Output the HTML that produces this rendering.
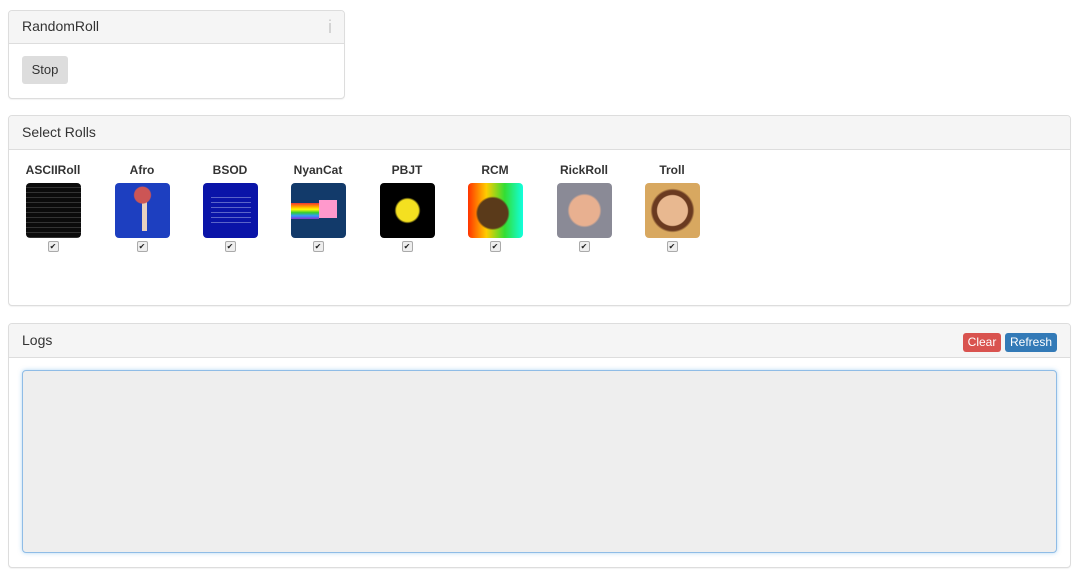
<!DOCTYPE html>
<html><head><meta charset="utf-8"><style>
body{margin:0;background:#fff;font-family:"Liberation Sans",sans-serif;color:#333;font-size:14px}
.p{position:absolute;border:1px solid #ddd;border-radius:4px;background:#fff;box-shadow:0 1px 1px rgba(0,0,0,.05)}
.h{background:#f5f5f5;border-bottom:1px solid #ddd;height:32px;line-height:31px;padding-left:13px;font-size:14px;color:#333;border-radius:3px 3px 0 0;position:relative}
.btn{position:absolute;border-radius:3px;font-size:12px;color:#fff;text-align:center}
.it{position:absolute;top:162px;width:80px;text-align:center}
.it b{display:block;font-size:12px;height:21px;line-height:16px}
.im{width:55px;height:55px;border-radius:4px;margin:0 auto}
.cb{width:9px;height:9px;margin:3px auto 0;border:1px solid #aaa;border-radius:2px;background:#eee;font-size:8px;line-height:9px;color:#222}
</style></head><body>
<div class="p" style="left:8px;top:10px;width:335px;height:87px">
<div class="h">RandomRoll<span style="position:absolute;right:12px;top:1px;color:#ccc;font-size:18px">i</span></div>
<div class="btn" style="left:13px;top:45px;width:46px;height:28px;line-height:28px;background:#ddd;color:#333;font-size:13px">Stop</div>
</div>
<div class="p" style="left:8px;top:115px;width:1061px;height:189px"><div class="h" style="height:33px;line-height:33px">Select Rolls</div></div>
<div class="it" style="left:13px"><b>ASCIIRoll</b><div class="im" style="background:#0b0b0b;background-image:repeating-linear-gradient(0deg,#333 0 1px,transparent 1px 5px)"></div><div class="cb">✔</div></div>
<div class="it" style="left:102px"><b>Afro</b><div class="im" style="background:radial-gradient(circle at 50% 22%,#c55 0 8px,transparent 9px),linear-gradient(#e8d0c0,#e8d0c0) 27px 18px/5px 30px no-repeat,#1d3fc0"></div><div class="cb">✔</div></div>
<div class="it" style="left:190px"><b>BSOD</b><div class="im" style="background:#0a14a8;background-image:repeating-linear-gradient(0deg,transparent 0 4px,#5a64c8 4px 5px);background-size:40px 30px;background-position:8px 14px;background-repeat:no-repeat"></div><div class="cb">✔</div></div>
<div class="it" style="left:278px"><b>NyanCat</b><div class="im" style="background:linear-gradient(#e33,#f90,#ff0,#3c3,#39f,#83c) 0 20px/28px 16px no-repeat,linear-gradient(#f9c,#f9c) 28px 17px/18px 18px no-repeat,#123a6a"></div><div class="cb">✔</div></div>
<div class="it" style="left:367px"><b>PBJT</b><div class="im" style="background:radial-gradient(ellipse at 50% 50%,#f4e020 0 11px,transparent 13px),#000"></div><div class="cb">✔</div></div>
<div class="it" style="left:455px"><b>RCM</b><div class="im" style="background:radial-gradient(ellipse at 45% 55%,#5a3a1a 0 15px,transparent 17px),linear-gradient(90deg,#f30,#fc0,#3d3,#1fd)"></div><div class="cb">✔</div></div>
<div class="it" style="left:544px"><b>RickRoll</b><div class="im" style="background:radial-gradient(ellipse at 50% 50%,#e8b090 0 15px,transparent 17px),#8a8a96"></div><div class="cb">✔</div></div>
<div class="it" style="left:632px"><b>Troll</b><div class="im" style="background:radial-gradient(ellipse at 50% 50%,#e8b890 0 15px,#6a3a20 16px 20px,transparent 22px),#d8a860"></div><div class="cb">✔</div></div>
<div class="p" style="left:8px;top:323px;width:1061px;height:243px">
<div class="h" style="height:33px;line-height:33px">Logs</div>
<div class="btn" style="left:954px;top:9px;width:38px;height:19px;line-height:19px;background:#d9534f">Clear</div>
<div class="btn" style="left:996px;top:9px;width:52px;height:19px;line-height:19px;background:#337ab7">Refresh</div>
<div style="position:absolute;left:13px;top:46px;width:1033px;height:181px;background:#eee;border:1px solid #8fbce6;border-radius:4px;box-shadow:0 0 4px rgba(102,175,233,.5)"></div>
</div>
</body></html>
